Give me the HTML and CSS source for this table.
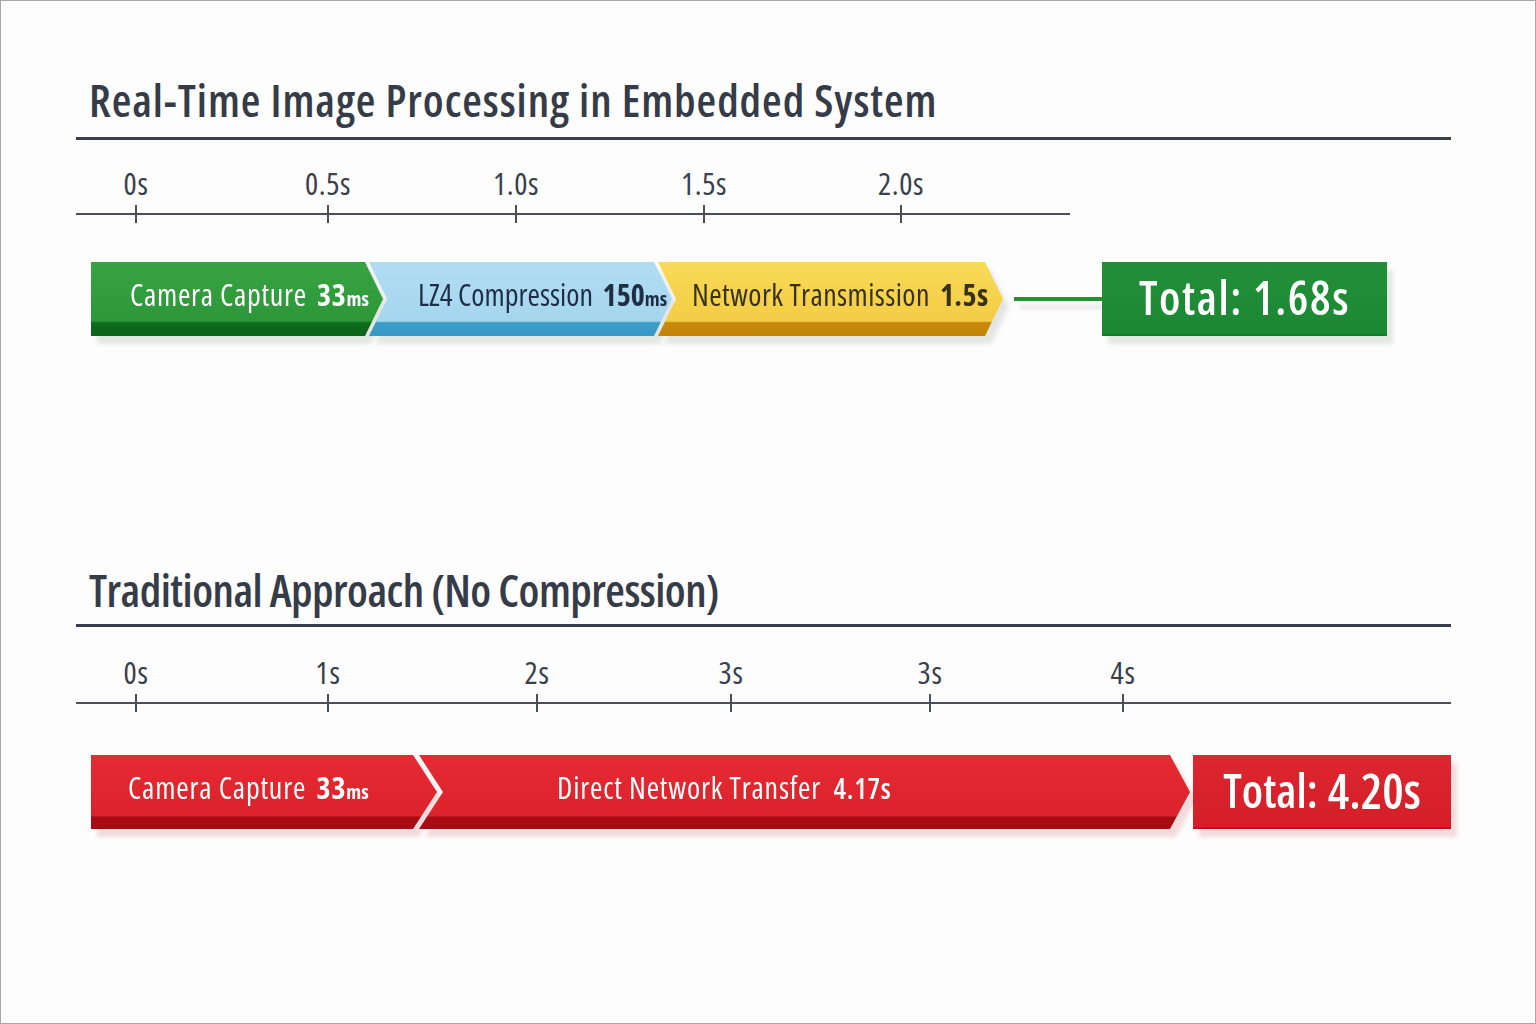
FILE: index.html
```html
<!DOCTYPE html>
<html lang="en">
<head>
<meta charset="utf-8">
<title>Real-Time Image Processing in Embedded System</title>
<link rel="stylesheet" href="styles.css">
</head>
<body>
<div class="page">
  <section class="chart chart-top">
    <h1 class="title">Real-Time Image Processing in Embedded System</h1>
    <div class="axis axis-short">
      <div class="axis-line"></div>
      <div class="tick" style="left:60px"><span class="tick-label">0s</span><span class="tick-mark"></span></div>
      <div class="tick" style="left:252px"><span class="tick-label">0.5s</span><span class="tick-mark"></span></div>
      <div class="tick" style="left:440px"><span class="tick-label">1.0s</span><span class="tick-mark"></span></div>
      <div class="tick" style="left:628px"><span class="tick-label">1.5s</span><span class="tick-mark"></span></div>
      <div class="tick" style="left:825px"><span class="tick-label">2.0s</span><span class="tick-mark"></span></div>
    </div>
    <div class="bar-row">
      <div class="seg seg-first seg-green"><span class="seg-text light">Camera Capture <b>33<small>ms</small></b></span></div>
      <div class="seg seg-mid seg-blue"><span class="seg-text dark-blue">LZ4 Compression <b>150<small>ms</small></b></span></div>
      <div class="seg seg-mid seg-yellow"><span class="seg-text dark-yellow">Network Transmission <b>1.5s</b></span></div>
      <div class="connector"></div>
      <div class="total total-green">Total: <b>1.68s</b></div>
    </div>
  </section>

  <section class="chart chart-bottom">
    <h1 class="title">Traditional Approach (No Compression)</h1>
    <div class="axis axis-long">
      <div class="axis-line"></div>
      <div class="tick" style="left:60px"><span class="tick-label">0s</span><span class="tick-mark"></span></div>
      <div class="tick" style="left:252px"><span class="tick-label">1s</span><span class="tick-mark"></span></div>
      <div class="tick" style="left:461px"><span class="tick-label">2s</span><span class="tick-mark"></span></div>
      <div class="tick" style="left:655px"><span class="tick-label">3s</span><span class="tick-mark"></span></div>
      <div class="tick" style="left:854px"><span class="tick-label">3s</span><span class="tick-mark"></span></div>
      <div class="tick" style="left:1047px"><span class="tick-label">4s</span><span class="tick-mark"></span></div>
    </div>
    <div class="bar-row bar-row-red">
      <div class="seg seg-first seg-red seg-red-1"><span class="seg-text seg-text-red light">Camera Capture <b>33<small>ms</small></b></span></div>
      <div class="seg seg-mid seg-red seg-red-2"><span class="seg-text seg-text-red light">Direct Network Transfer <b class="num-thin">4.17s</b></span></div>
      <div class="total total-red">Total: <b>4.20s</b></div>
    </div>
  </section>
</div>
</body>
</html>
```

FILE: styles.css
```css
html, body {
  margin: 0;
  padding: 0;
  background: #ffffff;
}

.page {
  width: 1536px;
  height: 1024px;
  box-sizing: border-box;
  border: 1px solid #a9a9a9;
  background: #fdfdfd;
  padding: 0 84px 0 75px;
  font-family: "Open Sans", "Liberation Sans Narrow", "DejaVu Sans Condensed", sans-serif;
  font-stretch: 75%;
  color: #363b48;
  overflow: hidden;
}

.title {
  margin: 0;
  padding-left: 13px;
  font-size: 45px;
  font-weight: 600;
  line-height: 54px;
  color: #363b48;
  border-bottom: 3px solid #3a3f4b;
  white-space: nowrap;
}

.chart-top .title {
  margin-top: 72px;
  padding-bottom: 10px;
  letter-spacing: 0.93px;
}

.chart-bottom .title {
  margin-top: 227px;
  padding-bottom: 7px;
  letter-spacing: -0.55px;
}

/* axes */
.axis {
  position: relative;
}

.axis-short {
  width: 994px;
  height: 86px;
}

.axis-long {
  width: 1375px;
  height: 88px;
}

.axis-line {
  position: absolute;
  left: 0;
  right: 0;
  top: 73px;
  height: 2px;
  background: #4a4f5a;
}

.axis-long .axis-line {
  top: 75px;
}

.tick {
  position: absolute;
  top: 0;
  width: 0;
  height: 100%;
}

.tick-label {
  position: absolute;
  top: 28px;
  left: 0;
  transform: translateX(-50%);
  font-size: 31px;
  line-height: 30px;
  font-weight: 400;
  letter-spacing: 0.6px;
  color: #3a3f4b;
  white-space: nowrap;
}

.axis-long .tick-label {
  top: 30px;
}

.tick-mark {
  position: absolute;
  top: 65px;
  left: -1px;
  width: 2px;
  height: 18px;
  background: #4a4f5a;
}

.axis-long .tick-mark {
  top: 67px;
}

/* bars */
.bar-row {
  display: flex;
  align-items: center;
  height: 74px;
  margin-top: 36px;
  padding-left: 15px;
  filter: drop-shadow(6px 8px 2px rgba(60, 80, 60, 0.13));
}

.bar-row-red {
  margin-top: 40px;
  filter: drop-shadow(6px 8px 2px rgba(200, 40, 50, 0.16));
}

.seg {
  flex: none;
  height: 74px;
  display: flex;
  align-items: center;
  box-sizing: border-box;
  padding-bottom: 10px;
}

.seg-first {
  clip-path: polygon(0 0, calc(100% - 18px) 0, 100% 50%, calc(100% - 18px) 100%, 0 100%);
}

.seg-mid {
  clip-path: polygon(0 0, calc(100% - 18px) 0, 100% 50%, calc(100% - 18px) 100%, 0 100%, 18px 50%);
}

.seg-text {
  font-size: 30px;
  font-weight: 500;
  white-space: nowrap;
  letter-spacing: 0.4px;
}

.seg-green .seg-text {
  letter-spacing: 0.7px;
}

.seg-blue .seg-text {
  letter-spacing: 0;
}

.seg-text-red {
  letter-spacing: 0.8px;
}

.seg-text b {
  font-weight: 700;
  margin-left: 4px;
}

.seg-text small {
  font-size: 20px;
  font-weight: 700;
  letter-spacing: 0;
}

.seg-text .num-thin {
  font-weight: 600;
  font-size: 28px;
  margin-left: 6px;
}

.light {
  color: #ffffff;
}

.dark-blue {
  color: #1f2e44;
}

.dark-yellow {
  color: #3a3217;
}

.seg-green {
  width: 292px;
  padding-left: 39px;
  background: linear-gradient(180deg, #37a443 0%, #2c9738 80%, #0f6b1d 82%, #0c6519 100%);
}

.seg-blue {
  width: 303px;
  margin-left: -14px;
  padding-left: 49px;
  background: linear-gradient(180deg, #b0ddf3 0%, #a5d6ef 80%, #3b9dc8 82%, #3898c3 100%);
}

.seg-yellow {
  width: 345px;
  margin-left: -14px;
  padding-left: 34px;
  background: linear-gradient(180deg, #f9da59 0%, #f3cd44 80%, #c98b0c 82%, #c38408 100%);
}

.connector {
  flex: none;
  width: 88px;
  height: 4px;
  margin-left: 11px;
  background: #23922f;
}

.total {
  flex: none;
  height: 74px;
  display: flex;
  align-items: center;
  justify-content: center;
  box-sizing: border-box;
  color: #ffffff;
  font-size: 46px;
  font-weight: 600;
  white-space: nowrap;
  padding-bottom: 4px;
}

.total b {
  font-weight: 650;
  margin-left: 10px;
}

.total-green {
  width: 285px;
  letter-spacing: 1.6px;
  background: linear-gradient(180deg, #228f38 0%, #1b8733 100%);
  box-shadow: inset 0 -2px 0 #167a2b;
}

/* red row */
.seg-red {
  background: linear-gradient(180deg, #e42a33 0%, #dc222b 82%, #a90c15 84%, #a50a13 100%);
}

.seg-red-1 {
  width: 346px;
  padding-left: 37px;
  clip-path: polygon(0 0, calc(100% - 24px) 0, 100% 50%, calc(100% - 24px) 100%, 0 100%);
}

.seg-red-2 {
  width: 771px;
  margin-left: -18px;
  padding-left: 138px;
  clip-path: polygon(0 0, calc(100% - 20px) 0, 100% 50%, calc(100% - 20px) 100%, 0 100%, 24px 50%);
}

.total-red {
  width: 258px;
  margin-left: 3px;
  background: linear-gradient(180deg, #dd262f 0%, #d41f28 100%);
  box-shadow: inset 0 -2px 0 #b8141d;
}

.total-red b {
  font-size: 48px;
}
```
